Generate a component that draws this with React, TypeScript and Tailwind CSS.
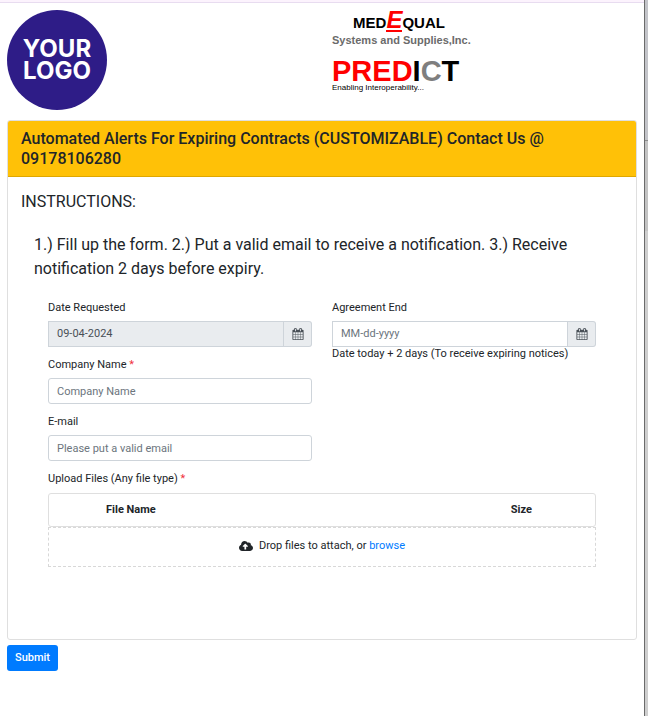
import React from 'react';
import { FaCloudUploadAlt } from 'react-icons/fa';

interface FieldProps {
  id: string;
  label: string;
  required?: boolean;
  children: React.ReactNode;
}

const Field: React.FC<FieldProps> = ({ id, label, required, children }) => (
  <div className="mb-2.5">
    <label htmlFor={id} className="block leading-4 mb-[5px]">
      {label} {required && <span className="text-[#f0303c]">*</span>}
    </label>
    {children}
  </div>
);

const CalendarIcon = () => (
  <svg viewBox="0 0 1792 1792" className="w-3 h-3" fill="currentColor" aria-hidden="true">
    <path d="M192 1664h288v-288h-288v288zm352 0h320v-288h-320v288zm-352-352h288v-320h-288v320zm352 0h320v-320h-320v320zm-352-384h288v-288h-288v288zm736 736h320v-288h-320v288zm-384-736h320v-288h-320v288zm768 736h288v-288h-288v288zm-384-352h320v-320h-320v320zm-352-864v-288q0-13-9.5-22.5t-22.5-9.5h-64q-13 0-22.5 9.5t-9.5 22.5v288q0 13 9.5 22.5t22.5 9.5h64q13 0 22.5-9.5t9.5-22.5zm736 864h288v-320h-288v320zm-384-384h320v-288h-320v288zm384 0h288v-288h-288v288zm32-480v-288q0-13-9.5-22.5t-22.5-9.5h-64q-13 0-22.5 9.5t-9.5 22.5v288q0 13 9.5 22.5t22.5 9.5h64q13 0 22.5-9.5t9.5-22.5zm384-64v1280q0 52-38 90t-90 38h-1408q-52 0-90-38t-38-90v-1280q0-52 38-90t90-38h128v-96q0-66 47-113t113-47h64q66 0 113 47t47 113v96h384v-96q0-66 47-113t113-47h64q66 0 113 47t47 113v96h128q52 0 90 38t38 90z" />
  </svg>
);

interface DateInputProps {
  id: string;
  value?: string;
  placeholder?: string;
  readOnly?: boolean;
}

const DateInput: React.FC<DateInputProps> = ({ id, value, placeholder, readOnly }) => (
  <div className="flex h-[26px]">
    <input
      id={id}
      type="text"
      defaultValue={value}
      placeholder={placeholder}
      readOnly={readOnly}
      className="flex-1 min-w-0 border border-[#ced4da] px-2 text-[#495057] placeholder:text-[#6c757d] read-only:bg-[#e9ecef]"
    />
    <button
      type="button"
      aria-label="Open calendar"
      className="w-7 flex items-center justify-center border border-l-0 border-[#ced4da] rounded-r-[3px] bg-[#e9ecef] text-[#495057]"
    >
      <CalendarIcon />
    </button>
  </div>
);

const textInput =
  'block w-full h-[26px] border border-[#ced4da] rounded-[3px] px-2 text-[#495057] placeholder:text-[#6c757d]';

const Header = () => (
  <header className="grid grid-cols-2 h-[117px] pt-[7px]">
    <div className="w-[100px] h-[100px] rounded-full bg-[#2e1c87] text-white flex items-center justify-center text-center font-['Inter',sans-serif] font-bold text-2xl leading-[22px]">
      <p>
        YOUR
        <br />
        LOGO
      </p>
    </div>
    <div className="w-[154px] px-2.5 font-['Liberation_Sans',sans-serif] font-bold whitespace-nowrap">
      <div className="h-6 flex items-baseline justify-center text-[15px] leading-5 text-black">
        MED
        <span className="italic text-2xl leading-5 text-[#f00] border-b-2 border-[#f00]">E</span>
        QUAL
      </div>
      <div className="text-[11px] leading-3 text-[#6b6b6b]">Systems and Supplies,Inc.</div>
      <div className="mt-3 text-[29px] leading-[26px] text-black">
        <span className="text-[#f00]">PRED</span>I<span className="text-[#7f7f7f]">C</span>T
      </div>
      <div className="text-[8px] leading-[8px] font-normal text-black">Enabling Interoperability...</div>
    </div>
  </header>
);

export default function App() {
  return (
    <div className="min-h-screen flex bg-white font-['Roboto',sans-serif] text-[11px] text-[#212529]">
      <div className="flex-1 min-w-0">
        <div className="h-[3px] bg-[#fcf3fd] border-b border-[#e8dcf0]" />
        <main className="px-[7px]">
          <Header />
          <form onSubmit={(e) => e.preventDefault()}>
            <section className="border border-[#dfdfdf] rounded-[3px] pb-[72px]">
              <h1 className="bg-[#ffc107] border-b border-[#dfa700] rounded-t-[2px] px-[13px] pt-2 pb-[7px] text-base leading-5 font-medium">
                Automated Alerts For Expiring Contracts (CUSTOMIZABLE) Contact Us @ 09178106280
              </h1>
              <div className="px-[13px] pt-[13px] text-base leading-6">
                <h2>INSTRUCTIONS:</h2>
                <p className="mt-[19px] px-[13px]">
                  1.) Fill up the form. 2.) Put a valid email to receive a notification. 3.) Receive
                  notification 2 days before expiry.
                </p>
              </div>
              <div className="px-10 pt-[19px]">
                <div className="grid grid-cols-2 gap-5">
                  <div>
                    <Field id="requested" label="Date Requested">
                      <DateInput id="requested" value="09-04-2024" readOnly />
                    </Field>
                    <Field id="company" label="Company Name" required>
                      <input id="company" type="text" placeholder="Company Name" className={textInput} />
                    </Field>
                    <Field id="email" label="E-mail">
                      <input id="email" type="email" placeholder="Please put a valid email" className={textInput} />
                    </Field>
                  </div>
                  <Field id="end" label="Agreement End">
                    <DateInput id="end" placeholder="MM-dd-yyyy" />
                    <p className="leading-[14px]">Date today + 2 days (To receive expiring notices)</p>
                  </Field>
                </div>
                <label htmlFor="files" className="block leading-4 mb-1.5">
                  Upload Files (Any file type) <span className="text-[#f0303c]">*</span>
                </label>
                <input id="files" type="file" multiple className="hidden" />
                <div className="border border-[#dfdfdf] rounded-[3px]">
                  <table className="w-full table-fixed">
                    <thead>
                      <tr className="h-8">
                        <th className="w-[30%] font-bold">File Name</th>
                        <th />
                        <th className="w-[27%] font-bold">Size</th>
                      </tr>
                    </thead>
                  </table>
                </div>
                <div className="h-10 pb-0.5 flex items-center justify-center border border-dashed border-[#d8d8d8]">
                  <FaCloudUploadAlt className="w-3.5 h-3.5 mr-1.5" />
                  <span>
                    Drop files to attach, or <a href="#files" className="text-[#007bff]">browse</a>
                  </span>
                </div>
              </div>
            </section>
            <button
              type="submit"
              className="mt-[5px] h-[26px] px-2 rounded-[3px] bg-[#007bff] text-white font-medium"
            >
              Submit
            </button>
          </form>
        </main>
      </div>
      <div className="w-1 flex flex-col border-l border-[#6b6b6b]">
        <div className="h-[140px] bg-[#c3c4c9]" />
        <div className="h-[91px] bg-[#c3c3c3] border-t border-[#8c8c8c]" />
        <div className="flex-1 bg-[#cecece]" />
      </div>
    </div>
  );
}
